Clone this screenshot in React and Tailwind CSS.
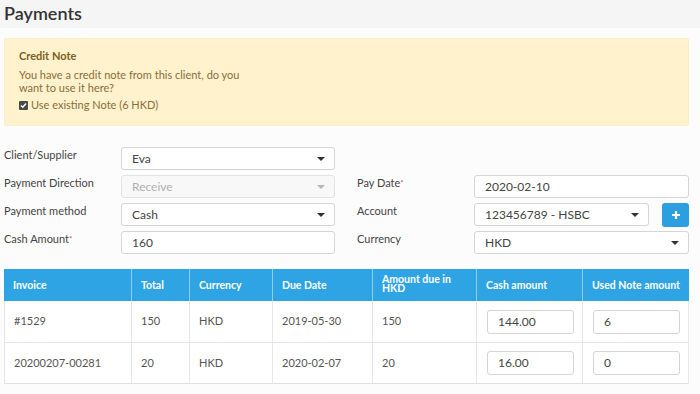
import React from "react";

const Caret = ({ light }) => (
  <svg width="8" height="4" viewBox="0 0 8 4" className="shrink-0">
    <path d="M0 0 H8 L4 4 Z" fill={light ? "#b5b5b5" : "#333"} />
  </svg>
);

const Select = ({ value, disabled, className = "" }) => (
  <div
    className={`h-[23px] flex items-center justify-between pl-[10px] pr-[9px] border rounded-[3px] text-[12px] ${
      disabled ? "bg-[#f8f8f8] border-[#e4e4e4] text-[#b0b0b0]" : "bg-white border-[#d5d5d5] text-[#444]"
    } ${className}`}
  >
    <span>{value}</span>
    <Caret light={disabled} />
  </div>
);

const Input = ({ value, className = "" }) => (
  <div className={`h-[23px] flex items-center pl-[10px] border border-[#d5d5d5] rounded-[3px] bg-white text-[12px] text-[#444] ${className}`}>
    {value}
  </div>
);

const Label = ({ children, req }) => (
  <div className="w-[117px] shrink-0 text-[11px] leading-[14px] text-[#444] self-start pt-[1px]">
    {children}
    {req && <span className="text-[#d9534f] text-[8px] align-top">*</span>}
  </div>
);

export default function App() {
  const cols = ["w-[127px]", "w-[58px]", "w-[83px]", "w-[100px]", "w-[104px]", "w-[106px]", "w-[107px]"];
  const rows = [
    ["#1529", "150", "HKD", "2019-05-30", "150", "144.00", "6"],
    ["20200207-00281", "20", "HKD", "2020-02-07", "20", "16.00", "0"],
  ];
  return (
    <div
      className="w-[700px] h-[394px] overflow-hidden bg-[#fcfcfc]"
      style={{ fontFamily: 'Lato, "Open Sans", sans-serif' }}
    >
      <div className="h-[28px] bg-[#f5f5f5] px-[4px] flex items-center">
        <span className="text-[18px] leading-none font-semibold text-[#333] pb-[2px]">Payments</span>
      </div>

      <div className="pl-[4px] pr-[11px]">
        <div className="mt-[10px] h-[88px] bg-[#fff2cc] border border-[#fbeec8] rounded-[2px] pl-[14px] pt-[10px] text-[#8a6d3b]">
          <div className="text-[11px] font-bold leading-[14px] text-[#7a5f22]">Credit Note</div>
          <div className="mt-[5px] text-[11px] leading-[13px] w-[230px]">
            You have a credit note from this client, do you want to use it here?
          </div>
          <div className="mt-[4px] flex items-center gap-[3px] text-[11px] leading-[14px]">
            <span className="w-[9px] h-[9px] bg-[#4a4a4a] rounded-[1px] flex items-center justify-center">
              <svg width="7" height="7" viewBox="0 0 7 7">
                <path d="M1 3.6 L2.8 5.3 L6 1.5" stroke="#fff" strokeWidth="1.4" fill="none" />
              </svg>
            </span>
            <span>Use existing Note (6 HKD)</span>
          </div>
        </div>

        <div className="mt-[21px] flex">
          <div className="w-[331px] flex flex-col gap-[5px]">
            <div className="flex h-[23px]">
              <Label>Client/Supplier</Label>
              <Select value="Eva" className="w-[214px]" />
            </div>
            <div className="flex h-[23px]">
              <Label>Payment Direction</Label>
              <Select value="Receive" disabled className="w-[214px]" />
            </div>
            <div className="flex h-[23px]">
              <Label>Payment method</Label>
              <Select value="Cash" className="w-[214px]" />
            </div>
            <div className="flex h-[23px]">
              <Label req>Cash Amount</Label>
              <Input value="160" className="w-[214px]" />
            </div>
          </div>
          <div className="ml-[22px] flex-1 flex flex-col gap-[5px] pt-[28px]">
            <div className="flex h-[23px]">
              <Label req>Pay Date</Label>
              <Input value="2020-02-10" className="flex-1" />
            </div>
            <div className="flex h-[23px]">
              <Label>Account</Label>
              <Select value="123456789 - HSBC" className="w-[175px]" />
              <div className="ml-[13px] w-[27px] h-[24px] bg-[#2b9fe0] rounded-[3px] flex items-center justify-center">
                <svg width="10" height="10" viewBox="0 0 10 10">
                  <path d="M5 1 V9 M1 5 H9" stroke="#fff" strokeWidth="2.2" />
                </svg>
              </div>
            </div>
            <div className="flex h-[23px]">
              <Label>Currency</Label>
              <Select value="HKD" className="flex-1" />
            </div>
          </div>
        </div>

        <div className="mt-[15px] border-b border-[#e0e0e0]">
          <div className="flex h-[32px] bg-[#2ea4e5] text-white font-bold text-[10.5px]">
            {["Invoice", "Total", "Currency", "Due Date", "Amount due in HKD", "Cash amount", "Used Note amount"].map((h, i) => (
              <div
                key={h}
                className={`${cols[i]} flex items-center px-[9px] leading-[9px] whitespace-nowrap ${i > 0 ? "border-l border-[#8fcdf0]" : ""}`}
              >
                {i === 4 ? (
                  <span className="block -mt-[3px] whitespace-normal w-[80px]">Amount due in HKD</span>
                ) : (
                  h
                )}
              </div>
            ))}
          </div>
          {rows.map((r, ri) => (
            <div key={ri} className={`flex h-[41px] bg-white ${ri > 0 ? "border-t border-[#e0e0e0]" : ""} border-l border-r border-[#e6e6e6]`}>
              {r.map((c, i) => (
                <div
                  key={i}
                  className={`${i === 0 ? "w-[126px]" : i === 6 ? "w-[106px]" : cols[i]} flex items-center text-[11px] text-[#555] ${
                    i > 0 ? "border-l border-[#e6e6e6]" : ""
                  } ${i >= 5 ? "pl-[10px]" : "px-[9px]"}`}
                >
                  {i >= 5 ? <Input value={c} className="w-[87px] h-[24px]" /> : c}
                </div>
              ))}
            </div>
          ))}
        </div>
      </div>
    </div>
  );
}
